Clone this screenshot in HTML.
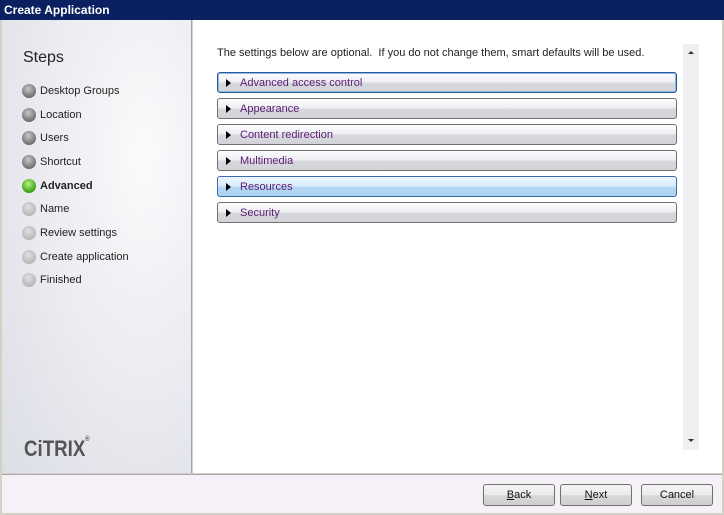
<!DOCTYPE html>
<html><head><style>
*{margin:0;padding:0;box-sizing:border-box}
body{width:724px;height:515px;background:#d4d0c8;font-family:"Liberation Sans",sans-serif;font-size:11px;position:relative;overflow:hidden}
.title{position:absolute;left:0;top:0;width:724px;height:20px;background:#0a2060;color:#fff;font-weight:bold;font-size:12px;line-height:21px;padding-left:4px}
.left{position:absolute;left:2px;top:20px;width:190px;height:453px;background:radial-gradient(ellipse at 75% 30%,#fbfbfd 0%,#f0f0f4 35%,#dcdee6 100%);border-right:1px solid #a0a4b0}
.main{position:absolute;left:193px;top:20px;width:529px;height:453px;background:#fff}
.bottom{position:absolute;left:2px;top:474px;width:720px;height:39px;background:#f6f1f6;border-top:1px solid #a8a8b0}
h1{position:absolute;left:21px;top:29px;font-weight:normal;font-size:16px;color:#222}
.step{position:absolute;left:20px;height:16px;line-height:16px;color:#222;font-size:11px}
.step i{position:absolute;left:0;top:1px;width:14px;height:14px;border-radius:50%;background:radial-gradient(circle at 45% 35%,#c8c8c8,#6a6a6a 75%,#555);}
.step span{position:absolute;left:18px;white-space:nowrap}
.step.cur i{background:radial-gradient(circle at 45% 35%,#b8f080,#3aa010 70%,#2a7a08)}
.step.cur span{font-weight:bold}
.step.off i{background:radial-gradient(circle at 45% 35%,#e0e0e0,#b4b4b4 75%,#a8a8a8)}
.desc{position:absolute;left:24px;top:27px;color:#222;font-size:11px}
.acc{position:absolute;left:24px;width:460px;height:21px;border:1px solid #707070;border-radius:3px;background:linear-gradient(#fbfcfe 0%,#eef0f4 45%,#d6d8de 55%,#d2d4da 100%);color:#5a1a70;line-height:20px;padding-left:22px;font-size:11px}
.acc:before{content:"";position:absolute;left:8px;top:6px;border-left:5px solid #000;border-top:4px solid transparent;border-bottom:4px solid transparent}
.acc.f{border-color:#2a5a9a;box-shadow:0 0 0 1px #90b8e0 inset}
.acc.h{border-color:#3a6ab0;background:linear-gradient(#eef6fe 0%,#dceefc 45%,#b4d8f4 55%,#acd2f0 100%)}
.sb{position:absolute;left:490px;top:24px;width:16px;height:406px;background:#efeef0}
.btn{position:absolute;top:9px;width:72px;height:22px;border:1px solid #707070;border-radius:3px;background:linear-gradient(#f4f4f4 0%,#ebebeb 50%,#d8d8d8 52%,#cfcfcf 100%);text-align:center;line-height:20px;font-size:11px;color:#111}
.logo{position:absolute;left:22px;top:416px;font-weight:bold;font-size:22px;color:#555;transform:scaleX(0.85);transform-origin:left}
</style></head><body>
<div class="title">Create Application</div>
<div class="left">
<h1>Steps</h1>
<div class="step" style="top:63px"><i></i><span>Desktop Groups</span></div>
<div class="step" style="top:87px"><i></i><span>Location</span></div>
<div class="step" style="top:110px"><i></i><span>Users</span></div>
<div class="step" style="top:134px"><i></i><span>Shortcut</span></div>
<div class="step cur" style="top:158px"><i></i><span>Advanced</span></div>
<div class="step off" style="top:181px"><i></i><span>Name</span></div>
<div class="step off" style="top:205px"><i></i><span>Review settings</span></div>
<div class="step off" style="top:229px"><i></i><span>Create application</span></div>
<div class="step off" style="top:252px"><i></i><span>Finished</span></div>
<div class="logo">CiTRIX<span style="font-size:7px;vertical-align:top">®</span></div>
</div>
<div class="main">
<div class="desc">The settings below are optional.&nbsp; If you do not change them, smart defaults will be used.</div>
<div class="acc f" style="top:52px">Advanced access control</div>
<div class="acc" style="top:78px">Appearance</div>
<div class="acc" style="top:104px">Content redirection</div>
<div class="acc" style="top:130px">Multimedia</div>
<div class="acc h" style="top:156px">Resources</div>
<div class="acc" style="top:182px">Security</div>
<div class="sb"><div style="position:absolute;left:5px;top:7px;border-bottom:3px solid #333;border-left:3px solid transparent;border-right:3px solid transparent"></div><div style="position:absolute;left:5px;top:395px;border-top:3px solid #333;border-left:3px solid transparent;border-right:3px solid transparent"></div></div>
</div>
<div class="bottom">
<div class="btn" style="left:481px"><u>B</u>ack</div>
<div class="btn" style="left:558px"><u>N</u>ext</div>
<div class="btn" style="left:639px">Cancel</div>
</div>
</body></html>
